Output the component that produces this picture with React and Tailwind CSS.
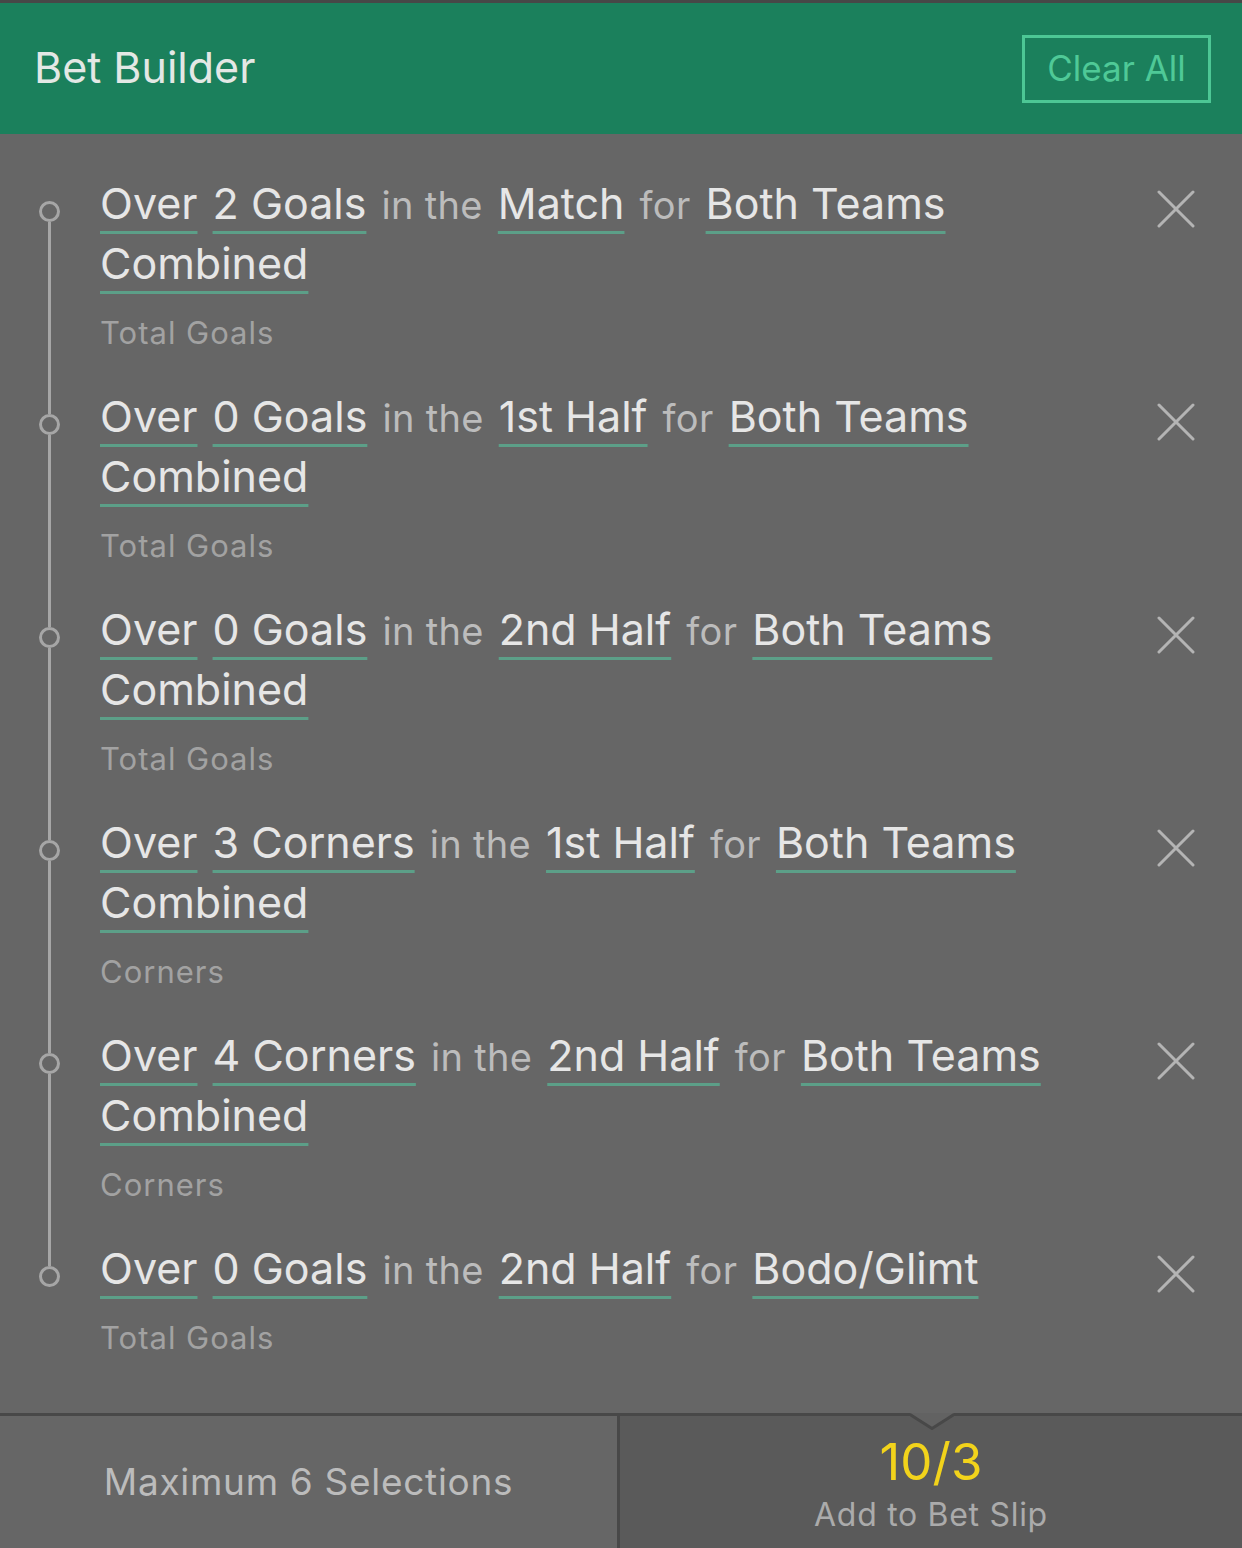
import React from 'react';

const SELECTIONS = [
  { parts: [{ t: 'Over', u: true }, { t: '2 Goals', u: true }, { t: 'in the' }, { t: 'Match', u: true }, { t: 'for' }, { t: 'Both Teams Combined', u: true }], market: 'Total Goals' },
  { parts: [{ t: 'Over', u: true }, { t: '0 Goals', u: true }, { t: 'in the' }, { t: '1st Half', u: true }, { t: 'for' }, { t: 'Both Teams Combined', u: true }], market: 'Total Goals' },
  { parts: [{ t: 'Over', u: true }, { t: '0 Goals', u: true }, { t: 'in the' }, { t: '2nd Half', u: true }, { t: 'for' }, { t: 'Both Teams Combined', u: true }], market: 'Total Goals' },
  { parts: [{ t: 'Over', u: true }, { t: '3 Corners', u: true }, { t: 'in the' }, { t: '1st Half', u: true }, { t: 'for' }, { t: 'Both Teams Combined', u: true }], market: 'Corners' },
  { parts: [{ t: 'Over', u: true }, { t: '4 Corners', u: true }, { t: 'in the' }, { t: '2nd Half', u: true }, { t: 'for' }, { t: 'Both Teams Combined', u: true }], market: 'Corners' },
  { parts: [{ t: 'Over', u: true }, { t: '0 Goals', u: true }, { t: 'in the' }, { t: '2nd Half', u: true }, { t: 'for' }, { t: 'Bodo/Glimt', u: true }], market: 'Total Goals' },
];

const CloseIcon = () => (
  <svg width="38" height="38" viewBox="0 0 38 38" className="block">
    <path d="M2 2 L36 36 M36 2 L2 36" stroke="#b4b4b4" strokeWidth="3" strokeLinecap="round" />
  </svg>
);

const SelectionRow = ({ sel, first, last }) => (
  <div className="flex">
    {/* timeline */}
    <div className="w-[98px] shrink-0 flex flex-col items-center">
      <div className={`w-[3px] h-[28px] ${first ? '' : 'bg-[#a6a6a6]'}`} />
      <div className="w-[21px] h-[21px] rounded-full border-[3px] border-[#a6a6a6]" />
      <div className={`w-[3px] flex-1 ${last ? '' : 'bg-[#a6a6a6]'}`} />
    </div>

    <div className="flex-1 pl-[2px] pb-[33px]">
      <p className="text-[43px] leading-[60px] text-[#e6e6e6]">
        {sel.parts.map((p, i) => (
          <React.Fragment key={i}>
            {i > 0 && ' '}
            {p.u ? (
              <span className="mr-[3px] underline decoration-[#5c9f88] decoration-[3px] underline-offset-[12px] [text-decoration-skip-ink:none]">{p.t}</span>
            ) : (
              <span className="mr-[3px] text-[38px] leading-none tracking-[0.3px] text-[#bcbcbc]">{p.t}</span>
            )}
          </React.Fragment>
        ))}
      </p>
      <p className="mt-[20px] text-[31px] leading-[40px] tracking-[1px] text-[#a2a2a2]">{sel.market}</p>
    </div>

    <div className="shrink-0 w-[38px] mr-[47px] ml-[20px] pt-[17px]">
      <CloseIcon />
    </div>
  </div>
);

export default function App() {
  return (
    <div className="w-[1242px] h-[1548px] bg-[#666666] flex flex-col overflow-hidden font-[Inter,sans-serif]">
      <div className="h-[3px] bg-[#474747] shrink-0" />

      <div className="h-[131px] shrink-0 bg-[#1b805c] flex items-center justify-between pl-[34px] pr-[31px]">
        <h1 className="text-[43px] leading-none text-[#e3e8e5] pb-[2px]">Bet Builder</h1>
        <button className="w-[189px] h-[68px] border-[3px] border-[#4dc795] text-[35px] leading-none text-[#4fc997] flex items-center justify-center">
          Clear All
        </button>
      </div>

      <div className="flex-1 pt-[39px]">
        {SELECTIONS.map((sel, i) => (
          <SelectionRow key={i} sel={sel} first={i === 0} last={i === SELECTIONS.length - 1} />
        ))}
      </div>

      <div className="h-[135px] shrink-0 border-t-[3px] border-[#484848] flex relative">
        <div className="w-[617px] bg-[#666666] flex items-center justify-center">
          <span className="text-[37px] tracking-[0.7px] text-[#bcbcbc]">Maximum 6 Selections</span>
        </div>
        <div className="flex-1 bg-[#5a5a5a] border-l-[3px] border-[#484848] flex flex-col items-center justify-center pt-[4px]">
          <span className="text-[51px] leading-[56px] text-[#f2d31b]">10/3</span>
          <span className="mt-[5px] text-[32px] leading-[40px] tracking-[0.7px] text-[#ababab]">Add to Bet Slip</span>
        </div>
        <svg width="44" height="17" viewBox="0 0 44 17" className="absolute left-[910px] -top-[3px]">
          <polygon points="0,0 44,0 22,16" fill="#626262" />
          <polyline points="0,1.5 22,15.5 44,1.5" fill="none" stroke="#484848" strokeWidth="3" />
        </svg>
      </div>
    </div>
  );
}
